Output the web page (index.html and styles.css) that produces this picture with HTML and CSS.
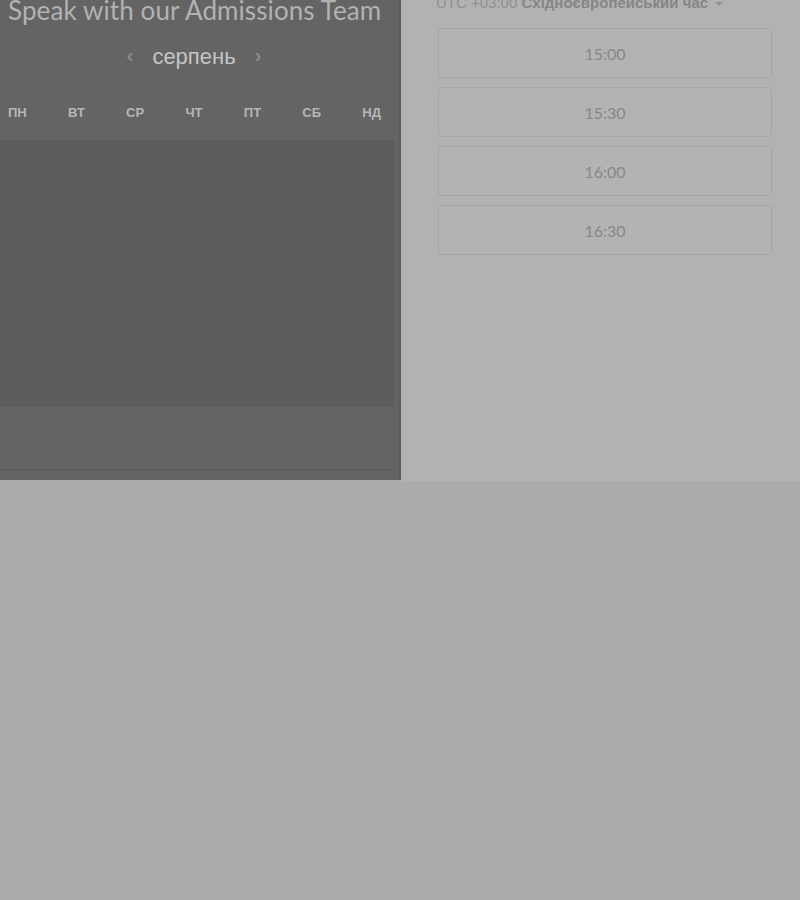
FILE: index.html
```html
<!DOCTYPE html>
<html lang="uk">
<head>
<meta charset="utf-8">
<title>Speak with our Admissions Team</title>
<link rel="stylesheet" href="styles.css">
</head>
<body>
<div class="widget">
  <section class="left">
    <h1 class="title">Speak with our Admissions Team</h1>
    <div class="month-nav">
      <span class="chev">&#8249;</span>
      <span class="month">серпень</span>
      <span class="chev">&#8250;</span>
    </div>
    <div class="weekdays">
      <span>ПН</span><span>ВТ</span><span>СР</span><span>ЧТ</span><span>ПТ</span><span>СБ</span><span>НД</span>
    </div>
    <div class="days"></div>
    <div class="footer"><div class="rule"></div></div>
  </section>
  <section class="right">
    <div class="tz">UTC +03:00 <b>Східноєвропейський час</b> <span class="caret"></span></div>
    <div class="slots">
      <button class="slot">15:00</button>
      <button class="slot">15:30</button>
      <button class="slot">16:00</button>
      <button class="slot">16:30</button>
    </div>
  </section>
</div>
</body>
</html>
```
FILE: styles.css
```css
html, body {
  margin: 0;
  padding: 0;
  background: #ababab;
  overflow: hidden;
}
.widget {
  display: flex;
  height: 481px;
  width: 800px;
  box-shadow: 0 1px 3px rgba(0,0,0,0.18);
}
.left {
  width: 399px;
  background: #646464;
  border-right: 2px solid #5b5b5b;
  display: flex;
  flex-direction: column;
  height: 480px;
}
.title {
  margin: -5px 0 0 8px;
  font-family: Lato, "Liberation Sans", sans-serif;
  font-weight: 400;
  font-size: 26px;
  line-height: 30px;
  color: #b2b2b2;
  white-space: nowrap;
  letter-spacing: 0.1px;
}
.month-nav {
  margin-top: 17px;
  height: 30px;
  display: flex;
  justify-content: center;
  align-items: center;
  gap: 19px;
  width: 388px;
  font-family: "Liberation Sans", Arial, sans-serif;
}
.month {
  font-size: 22px;
  line-height: 30px;
  color: #c4c4c4;
}
.chev {
  font-size: 21px;
  font-weight: 700;
  line-height: 30px;
  color: #8a8a8a;
  position: relative;
  top: -2px;
}
.weekdays {
  margin-top: 28px;
  height: 24px;
  display: flex;
  justify-content: space-between;
  align-items: center;
  padding: 0 13px 0 8px;
  width: 373px;
  font-family: "Liberation Sans", Arial, sans-serif;
  font-weight: 700;
  font-size: 13px;
  color: #b6b6b6;
}
.days {
  margin-top: 16px;
  width: 394px;
  height: 267px;
  background: #5c5c5c;
}
.footer {
  flex: 1;
  display: flex;
  flex-direction: column;
}
.rule {
  margin-top: 62px;
  width: 395px;
  height: 2px;
  background: #5d5d5d;
}
.right {
  flex: 1;
  background: #b2b2b2;
  padding: 0 28px 0 35px;
  font-family: "Liberation Sans", Arial, sans-serif;
}
.tz {
  margin-top: -6px;
  height: 17px;
  line-height: 17px;
  font-size: 15px;
  color: #909090;
  white-space: nowrap;
}
.tz b {
  color: #868686;
}
.caret {
  display: inline-block;
  width: 0;
  height: 0;
  border-left: 4px solid transparent;
  border-right: 4px solid transparent;
  border-top: 4px solid #929292;
  vertical-align: middle;
  margin-left: 3px;
}
.slots {
  margin-top: 17px;
  margin-left: 2px;
  display: flex;
  flex-direction: column;
  gap: 9px;
}
.slot {
  display: block;
  width: 100%;
  height: 50px;
  background: #b3b3b3;
  border: 1px solid #a6a6a6;
  border-radius: 3px;
  font-family: Lato, "Liberation Sans", sans-serif;
  font-size: 16px;
  color: #888888;
  padding: 0;
}
```
